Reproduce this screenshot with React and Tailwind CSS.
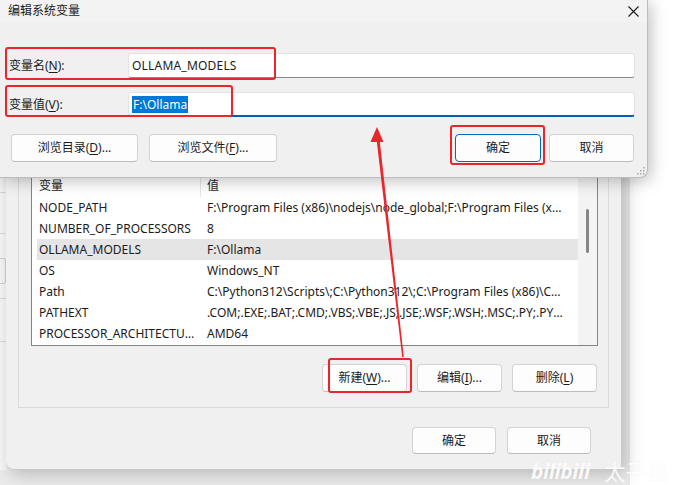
import React from 'react'

const envVars = [
  { name: 'NODE_PATH', value: 'F:\\Program Files (x86)\\nodejs\\node_global;F:\\Program Files (x86)\\nodejs\\node_modules' },
  { name: 'NUMBER_OF_PROCESSORS', value: '8' },
  { name: 'OLLAMA_MODELS', value: 'F:\\Ollama', selected: true },
  { name: 'OS', value: 'Windows_NT' },
  { name: 'Path', value: 'C:\\Python312\\Scripts\\;C:\\Python312\\;C:\\Program Files (x86)\\Common Files\\Oracle' },
  { name: 'PATHEXT', value: '.COM;.EXE;.BAT;.CMD;.VBS;.VBE;.JS;.JSE;.WSF;.WSH;.MSC;.PY;.PYW;.CPL' },
  { name: 'PROCESSOR_ARCHITECTURE', value: 'AMD64' },
]

const Btn = ({ children, className = '' }) => (
  <button
    className={`flex items-center justify-center rounded-[4px] border border-[#d3d3d3] border-b-[#bcbcbc] bg-[#fdfdfd] text-[12px] text-[#1b1b1b] ${className}`}
  >
    {children}
  </button>
)

const Key = ({ children }) => <span className="underline underline-offset-2">{children}</span>

const EnvList = () => (
  <div className="flex h-[172px] w-[567px] border border-[#858585] bg-white">
    <div className="flex w-[546px] flex-col overflow-hidden">
      <div className="flex h-[22px] items-center text-[12px] text-[#1b1b1b]">
        <div className="flex h-full w-[169px] items-center border-r border-[#e6e6e6] pl-[7px]">变量</div>
        <div className="pl-[6px]">值</div>
      </div>
      {envVars.map(v => (
        <div
          key={v.name}
          className={`ml-[5px] flex h-[21px] items-center text-[12px] text-[#1b1b1b] ${v.selected ? 'bg-[#e5e5e5]' : ''}`}
        >
          <div className="w-[164px] truncate pl-[2px] pr-[4px]">{v.name}</div>
          <div className="w-[364px] truncate pl-[6px]">{v.value}</div>
        </div>
      ))}
    </div>
    <div className="relative w-[19px] bg-[#f3f3f3]">
      <div className="absolute left-[8px] top-[34px] h-[44px] w-[3px] rounded-full bg-[#868686]" />
    </div>
  </div>
)

const SystemEnvWindow = () => (
  <div className="absolute left-[6px] top-0 flex h-[470px] w-[616px] flex-col rounded-bl-[8px] border-r border-b border-[#c9c9c9] bg-[#f0f0f0] pt-[140px] shadow-[4px_4px_18px_rgba(0,0,0,0.22)]">
    <div className="ml-[12px] flex w-[591px] flex-col items-start border border-[#dadada] pb-[15px] pl-[12px] pr-[11px] pt-[33px]">
      <EnvList />
      <div className="mt-[18px] flex w-full justify-end gap-[10px]">
        <Btn className="h-[28px] w-[85px]">新建(<Key>W</Key>)...</Btn>
        <Btn className="h-[28px] w-[85px]">编辑(<Key>I</Key>)...</Btn>
        <Btn className="h-[28px] w-[85px]">删除(<Key>L</Key>)</Btn>
      </div>
    </div>
    <div className="mt-[19px] flex justify-end gap-[11px] pr-[30px]">
      <Btn className="h-[27px] w-[84px]">确定</Btn>
      <Btn className="h-[27px] w-[84px]">取消</Btn>
    </div>
  </div>
)

const EditDialog = () => (
  <div className="absolute left-0 top-0 flex h-[178px] w-[648px] flex-col rounded-br-[8px] border-r border-b border-[#bdbdbd] bg-[#f0f0f0] shadow-[3px_3px_16px_rgba(0,0,0,0.25)]">
    <div className="flex h-[22px] items-center justify-between bg-[#f3f3f3] pl-[8px] pr-[8px] text-[12px] text-[#1b1b1b]">
      <span>编辑系统变量</span>
      <svg width="11" height="11" viewBox="0 0 11 11">
        <path d="M0.5 0.5L10.5 10.5M10.5 0.5L0.5 10.5" stroke="#1b1b1b" strokeWidth="1.1" />
      </svg>
    </div>
    <div className="flex flex-col gap-[14px] pl-[9px] pr-[12px] pt-[31px]">
      <div className="flex h-[25px] items-center">
        <label className="w-[119px] text-[12px] text-[#1b1b1b]">变量名(<Key>N</Key>):</label>
        <div className="flex h-full flex-1 items-center rounded-[3px] border border-[#e3e3e3] border-b-[#8b8b8b] bg-white pl-[3px] text-[12px] tracking-[0.2px] text-[#1b1b1b]">
          OLLAMA_MODELS
        </div>
      </div>
      <div className="flex h-[25px] items-center">
        <label className="w-[119px] text-[12px] text-[#1b1b1b]">变量值(<Key>V</Key>):</label>
        <div className="flex h-full flex-1 items-center rounded-[3px] border border-[#e3e3e3] border-b-2 border-b-[#005fb8] bg-white pl-[3px] text-[12px]">
          <span className="bg-[#0078d7] px-[1px] leading-[17px] text-white">F:\Ollama</span>
        </div>
      </div>
    </div>
    <div className="mt-[17px] flex items-center pl-[11px] pr-[13px]">
      <Btn className="h-[28px] w-[127px]">浏览目录(<Key>D</Key>)...</Btn>
      <Btn className="ml-[11px] h-[28px] w-[128px]">浏览文件(<Key>F</Key>)...</Btn>
      <Btn className="ml-auto h-[28px] w-[86px] !border-[#0067c0]">确定</Btn>
      <Btn className="ml-[8px] h-[28px] w-[85px]">取消</Btn>
    </div>
    <svg className="absolute bottom-[2px] right-[2px]" width="8" height="8" viewBox="0 0 8 8" fill="#a8a8a8">
      <rect x="6" y="0" width="1.5" height="1.5" />
      <rect x="3" y="3" width="1.5" height="1.5" />
      <rect x="6" y="3" width="1.5" height="1.5" />
      <rect x="0" y="6" width="1.5" height="1.5" />
      <rect x="3" y="6" width="1.5" height="1.5" />
      <rect x="6" y="6" width="1.5" height="1.5" />
    </svg>
  </div>
)

export default function App() {
  return (
    <div className="relative h-[485px] w-[674px] overflow-hidden bg-white font-['Noto_Sans','Noto_Sans_CJK_SC',sans-serif]">
      {/* window behind everything: left strip and bottom band */}
      <div className="absolute left-0 top-0 h-full w-[630px] bg-[#ebebeb]">
        <div className="absolute left-0 top-[150px] h-[320px] w-[6px] bg-[#f7f7f7]">
          <div className="mt-[42px] h-px bg-[#d9d9d9]" />
          <div className="mt-[40px] h-px bg-[#d9d9d9]" />
          <div className="mt-[24px] h-[26px] rounded-r-[3px] border border-l-0 border-[#cfcfcf]" />
          <div className="mt-[14px] h-px bg-[#d9d9d9]" />
          <div className="mt-[42px] h-px bg-[#d9d9d9]" />
        </div>
      </div>

      <SystemEnvWindow />
      <EditDialog />

      {/* red annotations */}
      <div className="absolute left-[5px] top-[47px] h-[33px] w-[271px] rounded-[3px] border-2 border-[#e8262b]" />
      <div className="absolute left-[5px] top-[85px] h-[32px] w-[228px] rounded-[3px] border-2 border-[#e8262b]" />
      <div className="absolute left-[450px] top-[125px] h-[40px] w-[95px] rounded-[3px] border-2 border-[#e8262b]" />
      <div className="absolute left-[328px] top-[358px] h-[35px] w-[84px] rounded-[3px] border-2 border-[#e8262b]" />
      <svg className="pointer-events-none absolute left-0 top-0" width="674" height="485">
        <polygon points="376.5,139 379.5,139 403.8,357 402.2,357" fill="#e8262b" />
        <polygon points="377,127 370.5,142 383.5,142" fill="#e8262b" />
      </svg>

      {/* watermark */}
      <div className="pointer-events-none absolute left-[531px] top-[455px] flex items-center gap-[14px] text-white/90 [text-shadow:0_0_1px_rgba(0,0,0,0.06)]">
        <span className="text-[21px] font-bold italic tracking-[-0.5px]">bilibili</span>
        <span className="text-[22px]">太子星</span>
      </div>
    </div>
  )
}
